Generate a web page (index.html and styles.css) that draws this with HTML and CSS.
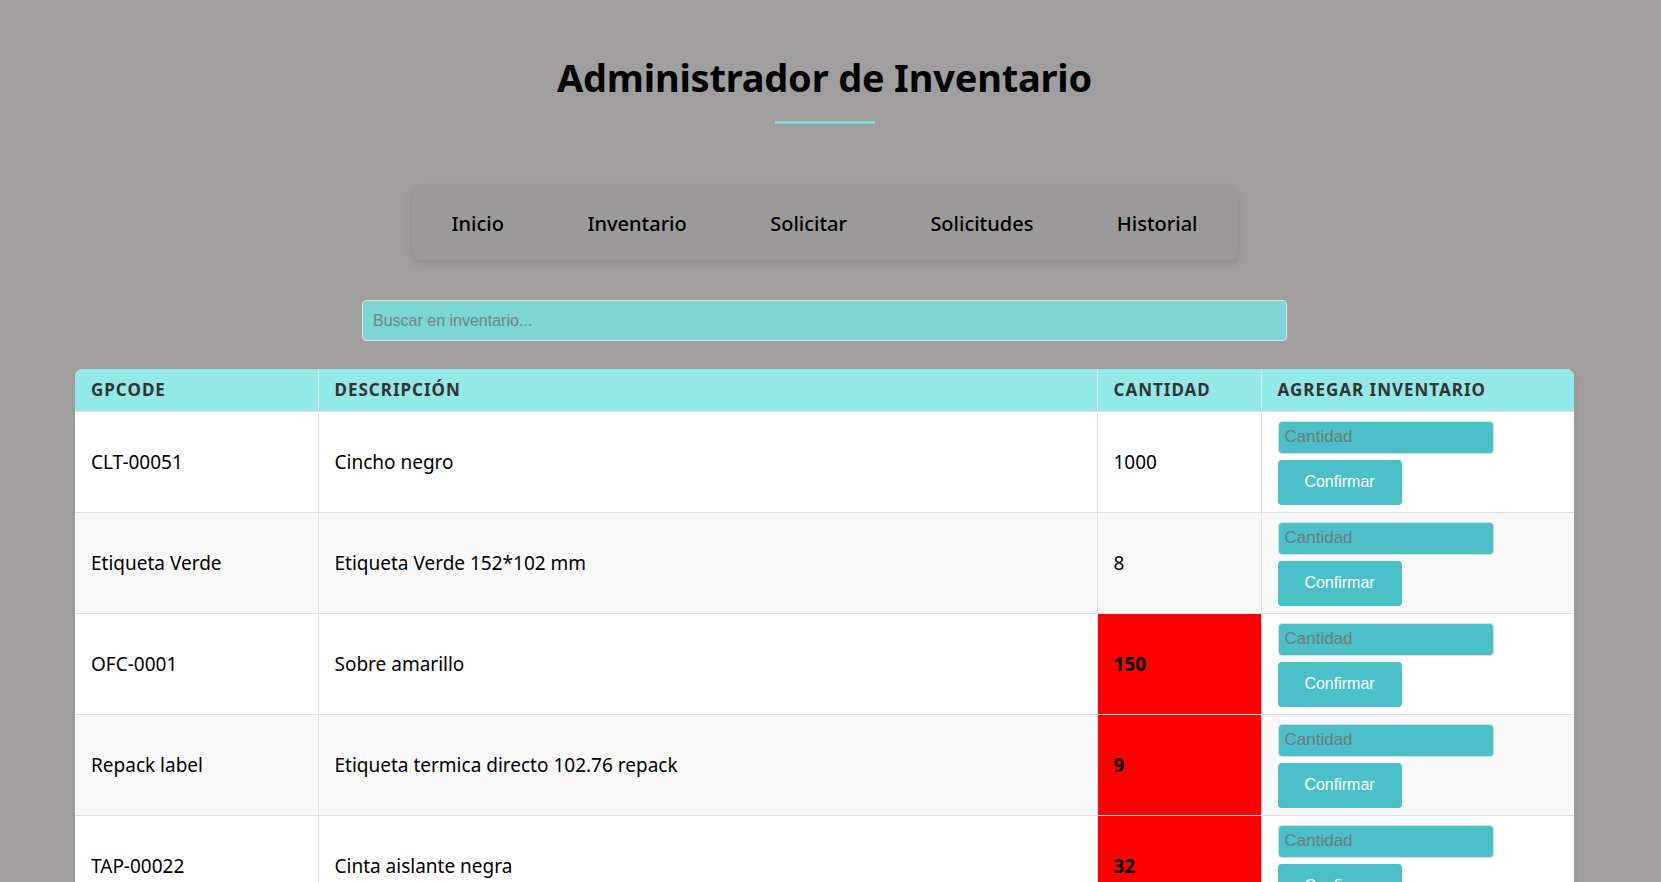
FILE: index.html
```html
<!DOCTYPE html>
<html lang="es">
<head>
<meta charset="utf-8">
<title>Administrador de Inventario</title>
<link rel="stylesheet" href="styles.css">
</head>
<body>
<div class="page">
  <header class="header">
    <h1 class="title">Administrador de Inventario</h1>
    <div class="title-line"></div>
  </header>
  <nav class="nav">
    <a class="nav-item" href="#">Inicio</a>
    <a class="nav-item" href="#">Inventario</a>
    <a class="nav-item" href="#">Solicitar</a>
    <a class="nav-item" href="#">Solicitudes</a>
    <a class="nav-item" href="#">Historial</a>
  </nav>
  <div class="search-wrap">
    <input class="search" type="text" placeholder="Buscar en inventario...">
  </div>
  <div class="table-wrap">
    <table class="inv">
      <thead>
        <tr>
          <th class="c1">GPCODE</th>
          <th class="c2">Descripción</th>
          <th class="c3">Cantidad</th>
          <th class="c4">Agregar Inventario</th>
        </tr>
      </thead>
      <tbody>
        <tr>
          <td>CLT-00051</td>
          <td>Cincho negro</td>
          <td class="qty">1000</td>
          <td class="act"><input class="qty-input" type="number" placeholder="Cantidad"><button class="btn">Confirmar</button></td>
        </tr>
        <tr>
          <td>Etiqueta Verde</td>
          <td>Etiqueta Verde 152*102 mm</td>
          <td class="qty">8</td>
          <td class="act"><input class="qty-input" type="number" placeholder="Cantidad"><button class="btn">Confirmar</button></td>
        </tr>
        <tr>
          <td>OFC-0001</td>
          <td>Sobre amarillo</td>
          <td class="qty low">150</td>
          <td class="act"><input class="qty-input" type="number" placeholder="Cantidad"><button class="btn">Confirmar</button></td>
        </tr>
        <tr>
          <td>Repack label</td>
          <td>Etiqueta termica directo 102.76 repack</td>
          <td class="qty low">9</td>
          <td class="act"><input class="qty-input" type="number" placeholder="Cantidad"><button class="btn">Confirmar</button></td>
        </tr>
        <tr>
          <td>TAP-00022</td>
          <td>Cinta aislante negra</td>
          <td class="qty low">32</td>
          <td class="act"><input class="qty-input" type="number" placeholder="Cantidad"><button class="btn">Confirmar</button></td>
        </tr>
      </tbody>
    </table>
  </div>
</div>
</body>
</html>
```
FILE: styles.css
```css
html, body {
  margin: 0;
  padding: 0;
}
body {
  background: #a09e9f;
  font-family: "Noto Sans", "Open Sans", sans-serif;
  color: #000;
  padding-right: 12px;
}
.page {
  width: 1499px;
  margin: 0 auto;
}
.header {
  padding-top: 53px;
  display: flex;
  flex-direction: column;
  align-items: center;
}
.title {
  margin: 0;
  font-size: 38px;
  font-weight: 700;
  line-height: 48px;
  letter-spacing: -0.2px;
}
.title-line {
  width: 100px;
  height: 3px;
  background: #7fd8d4;
  margin-top: 20px;
}
.nav {
  margin: 62px auto 0;
  width: 826px;
  height: 74px;
  box-sizing: border-box;
  display: flex;
  justify-content: space-between;
  align-items: center;
  padding: 0 40px;
  background: #9b999a;
  border-radius: 8px;
  box-shadow: 0 3px 8px rgba(0, 0, 0, 0.12);
}
.nav-item {
  color: #000;
  text-decoration: none;
  font-size: 20px;
  font-weight: 500;
}
.search-wrap {
  margin-top: 40px;
  display: flex;
  justify-content: center;
}
.search {
  width: 925px;
  height: 41px;
  box-sizing: border-box;
  background: #7dd6d2;
  border: 1px solid #e2e2e2;
  border-radius: 4px;
  padding: 0 10px;
  font-family: "Liberation Sans", Arial, sans-serif;
  font-size: 16px;
  outline: none;
}
.search::placeholder {
  color: #6f8583;
}
.table-wrap {
  margin-top: 28px;
  border-radius: 8px;
  overflow: hidden;
  background: #fff;
  box-shadow: 0 2px 6px rgba(0, 0, 0, 0.08);
}
.inv {
  width: 100%;
  border-collapse: collapse;
  table-layout: fixed;
}
.c1 { width: 243px; }
.c2 { width: 779px; }
.c3 { width: 164px; }
.inv th {
  background: #92e9e6;
  color: #333;
  text-align: left;
  text-transform: uppercase;
  font-size: 17px;
  font-weight: 700;
  letter-spacing: 1px;
  height: 42px;
  box-sizing: border-box;
  padding: 0 16px;
  border-right: 1px solid #dfe3e3;
  border-bottom: 1px solid #dedee6;
}
.inv th:last-child,
.inv td:last-child {
  border-right: none;
}
.inv td {
  font-size: 19px;
  height: 100px;
  box-sizing: border-box;
  padding: 0 16px;
  vertical-align: middle;
  border-right: 1px solid #dedee6;
  border-bottom: 1px solid #dedee6;
}
.inv tbody tr:nth-child(even) td {
  background: #f9f9f9;
}
.inv tbody tr td.low {
  background: #ff0000;
  font-weight: 700;
}
.inv td.act {
  padding: 9px 16px 7px;
}
.qty-input {
  display: block;
  width: 216px;
  height: 33px;
  box-sizing: border-box;
  background: #4bc0c8;
  border: 1px solid #dcdcdc;
  border-radius: 4px;
  padding: 0 6px;
  font-family: "Liberation Sans", Arial, sans-serif;
  font-size: 17px;
  outline: none;
  -moz-appearance: textfield;
}
.qty-input::placeholder {
  color: #707a7b;
}
.qty-input::-webkit-outer-spin-button,
.qty-input::-webkit-inner-spin-button {
  -webkit-appearance: none;
  margin: 0;
}
.btn {
  display: block;
  margin-top: 6px;
  width: 124px;
  height: 45px;
  background: #4bc0c8;
  color: #fff;
  border: none;
  border-radius: 4px;
  font-family: "Liberation Sans", Arial, sans-serif;
  font-size: 16px;
  cursor: pointer;
}
```
